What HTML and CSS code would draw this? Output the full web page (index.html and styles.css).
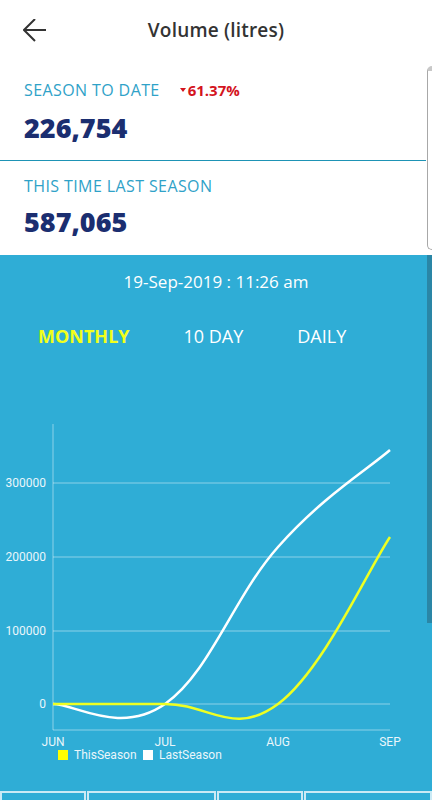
FILE: index.html
```html
<!DOCTYPE html>
<html lang="en">
<head>
<meta charset="utf-8"/>
<title>Volume (litres)</title>
<link rel="stylesheet" href="styles.css">
</head>
<body>
<div class="app">
  <div class="topbar">
    <svg class="back" width="24" height="24" viewBox="0 0 24 24"><path d="M1 11H23M12 0L1 11L12 22" fill="none" stroke="#333" stroke-width="2"/></svg>
    <div class="title">Volume (litres)</div>
  </div>

  <div class="stats">
    <div class="stat first">
      <div class="stat-label">SEASON TO DATE <span class="change"><span class="tri"></span>61.37%</span></div>
      <div class="stat-value">226,754</div>
    </div>
    <div class="stat second">
      <div class="stat-label">THIS TIME LAST SEASON</div>
      <div class="stat-value">587,065</div>
    </div>
    <div class="edge-tab"></div>
  </div>

  <div class="panel">
    <div class="edge-thumb"></div>
    <div class="stamp">19-Sep-2019 : 11:26 am</div>
    <div class="tabs">
      <span class="tab active">MONTHLY</span>
      <span class="tab">10 DAY</span>
      <span class="tab">DAILY</span>
    </div>

    <svg class="chart" width="432" height="410" viewBox="0 370 432 410">
      <g class="grid">
        <line x1="53" y1="483" x2="390" y2="483"/>
        <line x1="53" y1="557" x2="390" y2="557"/>
        <line x1="53" y1="631" x2="390" y2="631"/>
        <line x1="53" y1="704" x2="390" y2="704"/>
        <line x1="53" y1="730" x2="390" y2="730"/>
        <line x1="53" y1="424" x2="53" y2="730"/>
      </g>
      <g class="ylabels">
        <text x="46" y="487">300000</text>
        <text x="46" y="561">200000</text>
        <text x="46" y="635">100000</text>
        <text x="46" y="708">0</text>
      </g>
      <g class="xlabels">
        <text x="53" y="746">JUN</text>
        <text x="165" y="746">JUL</text>
        <text x="278" y="746">AUG</text>
        <text x="390" y="746">SEP</text>
      </g>
      <path class="line last" d="M53,704 C75.4,704 120,735.4 165,704 C210,672.6 233,597.8 278,547 C323,496.2 367.6,469.4 390,450"/>
      <path class="line this" d="M53,704 C75.4,704 120,704 165,704 C210,704 233,737.4 278,704 C323,670.6 367.6,570.4 390,537"/>
      <rect x="58" y="750" width="10" height="10" fill="#ffff00"/>
      <text class="legend" x="74" y="759">ThisSeason</text>
      <rect x="143" y="750" width="10" height="10" fill="#ffffff"/>
      <text class="legend" x="159" y="759">LastSeason</text>
    </svg>

    <div class="bottom-row">
      <div class="cell c1"></div>
      <div class="cell c2"></div>
      <div class="cell c3"></div>
      <div class="cell c4"></div>
    </div>
  </div>
</div>
</body>
</html>
```

FILE: styles.css
```css
body {
  margin: 0;
  font-family: 'Open Sans', sans-serif;
  background: #fff;
}
.app {
  width: 432px;
  height: 800px;
  overflow: hidden;
  display: flex;
  flex-direction: column;
}
.topbar {
  height: 60px;
  flex-shrink: 0;
  display: flex;
  align-items: center;
  position: relative;
}
.back {
  margin-left: 23px;
  margin-top: 1px;
}
.title {
  position: absolute;
  left: 0;
  right: 0;
  text-align: center;
  font-size: 19px;
  font-weight: 600;
  color: #333;
  letter-spacing: 0.2px;
  pointer-events: none;
}
.stats {
  position: relative;
  flex-shrink: 0;
}
.stat {
  padding: 0 24px;
}
.stat.first {
  padding-top: 20px;
  padding-bottom: 16px;
  border-bottom: 1px solid #1e93b5;
  margin-right: 6px;
  padding-right: 18px;
}
.stat.second {
  padding-top: 15px;
  padding-bottom: 17px;
}
.stat-label {
  font-size: 16px;
  line-height: 20px;
  letter-spacing: 0.4px;
  color: #2fa2c8;
  display: flex;
  align-items: center;
}
.stat.second .stat-label {
  margin-bottom: 10px;
}
.stat.first .stat-label {
  margin-bottom: 12px;
}
.change {
  margin-left: 20px;
  color: #d4141e;
  font-weight: 700;
  font-size: 15px;
  letter-spacing: 0;
  display: flex;
  align-items: center;
}
.tri {
  width: 0;
  height: 0;
  border-left: 3px solid transparent;
  border-right: 3px solid transparent;
  border-top: 4px solid #d4141e;
  margin-right: 2px;
}
.stat-value {
  font-size: 27px;
  line-height: 32px;
  font-weight: 800;
  color: #1b2e70;
}
.edge-tab {
  position: absolute;
  right: 0;
  top: 6px;
  width: 4px;
  height: 178px;
  border: 1px solid #a8a8a8;
  border-right: none;
  border-radius: 6px 0 0 6px;
  border-top: 5px solid #c8c8c8;
}
.panel {
  flex: 1;
  min-height: 0;
  background: #2fadd6;
  position: relative;
}
.edge-thumb {
  position: absolute;
  right: 0;
  top: 0;
  width: 5px;
  height: 368px;
  background: #2a86a6;
}
.stamp {
  padding-top: 15px;
  text-align: center;
  color: #fff;
  font-size: 17px;
  line-height: 24px;
}
.tabs {
  display: flex;
  gap: 54px;
  padding-left: 38px;
  margin-top: 30px;
  line-height: 24px;
  font-size: 18px;
  color: #fff;
}
.tab.active {
  color: #f2ff1a;
  font-weight: 700;
}
.chart {
  display: block;
  margin-top: 22px;
}
.grid line {
  stroke: rgba(255, 255, 255, 0.45);
  stroke-width: 1;
}
.chart text {
  font-family: Roboto, sans-serif;
  font-size: 12px;
  fill: #eaf6fb;
}
.ylabels text {
  text-anchor: end;
}
.xlabels text {
  text-anchor: middle;
}
.line {
  fill: none;
  stroke-width: 2.5;
}
.line.last {
  stroke: #fff;
}
.line.this {
  stroke: #eeff22;
}
.bottom-row {
  display: flex;
  margin-top: 11px;
  gap: 1px;
}
.cell {
  height: 30px;
  border: 2px solid rgba(255, 255, 255, 0.75);
  box-sizing: border-box;
}
.c1 { width: 86px; }
.c2 { width: 129px; }
.c3 { width: 86px; }
.c4 { width: 128px; }
```
